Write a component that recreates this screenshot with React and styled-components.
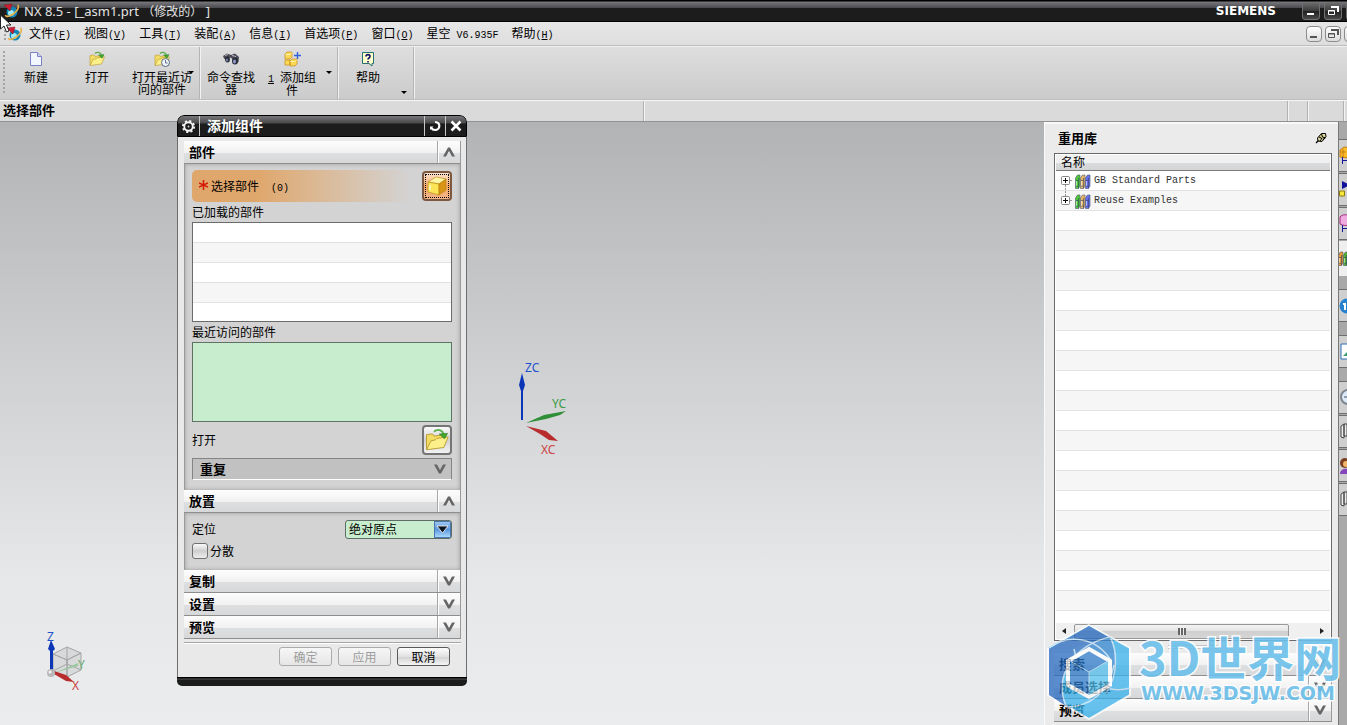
import { useState } from 'react'
import styled, { createGlobalStyle, css } from 'styled-components'

const GlobalStyle = createGlobalStyle`
  * {
    box-sizing: border-box;
  }
  body {
    margin: 0;
    overflow: hidden;
  }
  button, select, input {
    font: inherit;
    color: inherit;
    margin: 0;
  }
  ul {
    list-style: none;
    margin: 0;
    padding: 0;
  }
`

const Desktop = styled.div`
  position: relative;
  display: flex;
  flex-direction: column;
  height: 100vh;
  overflow: hidden;
  font-family: 'Noto Sans CJK SC', sans-serif;
  font-size: 12px;
  line-height: 12px;
  color: #000;
`

const Latin = styled.span`
  font-family: 'Liberation Mono', monospace;
  font-size: 10px;
  line-height: 8px;
  white-space: pre;
`

/* ---- window title ---- */

const TitleBar = styled.header`
  display: flex;
  align-items: center;
  height: 22px;
  padding-left: 3px;
  background: linear-gradient(#000 1px, #77777b 2px, #49494d 8px, #1c1c1c 8px, #1c1c1c 21px, #000 21px);
  color: #e4e4e4;
`

const WindowTitle = styled.h1`
  flex: 1;
  margin: 0 0 0 4px;
  font-family: 'Noto Sans', 'Noto Sans CJK SC', sans-serif;
  font-size: 13px;
  font-weight: 400;
  line-height: 13px;
  white-space: pre;
`

const TitleNote = styled.span`
  font-family: 'Noto Sans CJK SC', sans-serif;
  font-size: 12px;
  text-spacing-trim: space-all;
`

const Brand = styled.span`
  margin-right: 26px;
  font-family: 'DejaVu Sans', sans-serif;
  font-size: 12px;
  font-weight: 700;
  color: #fff;
`

const Controls = styled.div`
  display: flex;
  flex: none;
  gap: ${({ $light }) => ($light ? '3px' : '4px')};
  width: ${({ $light }) => ($light ? '41px' : '45px')};
  overflow: hidden;
`

const ControlButton = styled.button`
  display: flex;
  flex: none;
  align-items: center;
  justify-content: center;
  width: 18px;
  height: 18px;
  padding: 0;
  border: 1px solid #707070;
  border-radius: 3px;
  background: ${({ $close }) =>
    $close ? 'linear-gradient(#e07050, #b02a14)' : 'linear-gradient(#6a6a6a, #3a3a3a 50%, #202020 50%, #484848)'};
  ${({ $light }) =>
    $light &&
    css`
      width: 16px;
      height: 16px;
      border-color: #8c8c8c;
      border-radius: 4px;
      background: linear-gradient(#fff, #dcdcdc);
    `}
`

/* ---- menu, toolbar, cue line ---- */

const MenuBar = styled.nav`
  display: flex;
  align-items: center;
  height: 24px;
  padding-left: 4px;
  background: linear-gradient(#e6e6e6, #dedede);
  border-bottom: 1px solid #bdbdbd;
`

const Grip = styled.span`
  flex: none;
  width: 2px;
  height: ${({ $h }) => $h}px;
  background: repeating-linear-gradient(#a4a4a4 0 2px, transparent 2px 4px);
`

const Menus = styled.ul`
  display: flex;
  flex: 1;
  gap: 13px;
  margin-left: 6px;
`

const MenuLink = styled.a`
  color: inherit;
  text-decoration: none;
  white-space: nowrap;
`

const ToolBar = styled.div`
  display: flex;
  height: 54px;
  background: linear-gradient(#dedede, #cbcbcb);
  border-top: 1px solid #f0f0f0;
  border-bottom: 1px solid #bcbcbc;
`

const ToolGroup = styled.div`
  display: flex;
  padding: ${({ $first }) => ($first ? '0 2px 0 3px' : '0 2px 0 1px')};
  border-right: 1px solid #b4b4b4;
  box-shadow: 1px 0 #f2f2f2;
  align-items: ${({ $first }) => ($first ? 'center' : 'stretch')};
`

const ToolButton = styled.button`
  position: relative;
  display: flex;
  flex-direction: column;
  align-items: center;
  gap: 4px;
  width: ${({ $w }) => $w}px;
  height: 100%;
  padding: 4px 0 0;
  border: 0;
  background: none;
  white-space: pre;
  line-height: 12px;
`

const DropMark = styled.span`
  position: absolute;
  right: 3px;
  top: 24px;
  border: 3px solid transparent;
  border-top-color: #000;
  border-bottom: 0;
`

const MoreButton = styled.button`
  display: flex;
  align-items: center;
  justify-content: center;
  align-self: flex-end;
  width: 14px;
  height: 14px;
  padding: 0;
  border: 0;
  background: none;

  &::after {
    content: '';
    border: 3px solid transparent;
    border-top-color: #000;
    border-bottom: 0;
  }
`

const CueLine = styled.div`
  display: grid;
  grid-template-columns: 1fr 1fr 20px 36px 3px;
  height: 22px;
  background: #dadada;
  border-top: 1px solid #f6f6f6;
  border-bottom: 1px solid #929292;
`

const CueCell = styled.div`
  padding: 3px;
  font-size: 13px;
  font-weight: 700;
  border-right: 1px solid #b2b2b2;
  box-shadow: 1px 0 #f4f4f4;
`

/* ---- graphics area ---- */

const Workspace = styled.main`
  position: relative;
  display: flex;
  flex: 1;
  min-height: 0;
  justify-content: flex-end;
  background: linear-gradient(#b2b3b4, #d0d1d3 42%, #e5e7e8 75%, #eaecee);
`

const Triad = styled.svg`
  position: absolute;
  left: ${({ $x }) => $x}px;
  top: ${({ $y }) => $y}px;
  font-family: 'Noto Sans', sans-serif;
  font-size: 12px;
`

/* ---- add component dialog ---- */

const Dialog = styled.section`
  position: absolute;
  left: 177px;
  top: 115px;
  width: 290px;
  border-radius: 7px 7px 5px 5px;
  background: #e9e9e9;
  overflow: hidden;
`

const DialogTitle = styled.div`
  display: flex;
  align-items: stretch;
  height: 22px;
  border: 1px solid #000;
  border-radius: 7px 7px 0 0;
  background: linear-gradient(#77777a, #4a4a4c 7px, #1c1c1c 8px);
  color: #fff;
`

const DialogName = styled.h2`
  flex: 1;
  margin: 0;
  padding: 2px 7px;
  border-left: 1px solid #c8c8c8;
  font-size: 14px;
  line-height: 14px;
`

const TitleButton = styled.button`
  display: flex;
  align-items: center;
  justify-content: center;
  width: 21px;
  padding: 0;
  border: 0;
  border-left: ${({ $line }) => ($line ? '1px solid #c8c8c8' : '0')};
  background: none;
`

const DialogBody = styled.div`
  padding: 4px 5px 11px 6px;
  border: solid #6e6e6e;
  border-width: 0 1px;
`

const DialogFoot = styled.div`
  height: 9px;
  background: linear-gradient(#000 1px, #555 2px, #1c1c1c 3px);
`

const SectionHead = styled.button`
  display: flex;
  align-items: stretch;
  width: 100%;
  height: 23px;
  padding: 0;
  border: 0;
  border-bottom: 1px solid #8e8e8e;
  border-right: 1px solid #9a9a9a;
  background: linear-gradient(#fdfdfd, #f1f1f2 12px, #dedfe1 12px, #d7d8da);
  font-size: 13px;
  font-weight: 700;
  line-height: 22px;
  text-align: left;
`

const SectionName = styled.span`
  flex: 1;
  padding-left: 5px;
`

const Fold = styled.span`
  display: flex;
  align-items: center;
  justify-content: center;
  width: 23px;
  border-left: 1px solid #a8a8a8;
  box-shadow: inset 1px 0 #fff;
`

const Panel = styled.div`
  padding: ${({ $small }) => ($small ? '5px 8px 8px 7px' : '6px 8px 10px 7px')};
  border: solid #9a9a9a;
  border-width: 0 1px;
  background: #d3d3d3;
  box-shadow: inset 0 0 4px #9c9c9c;
`

const PickRow = styled.div`
  display: flex;
  align-items: center;
  justify-content: space-between;
  height: 32px;
  border-radius: 5px;
  background: linear-gradient(90deg, #e0a76c 25%, #d3d3d3 84%);
`

const PickLabel = styled.span`
  display: flex;
  align-items: center;
  padding-left: 7px;
  gap: 3px;
  white-space: pre;
`

const Star = styled.svg`
  flex: none;
  margin-bottom: 3px;
`

const IconButton = styled.button`
  display: flex;
  align-items: center;
  justify-content: center;
  width: 30px;
  height: 30px;
  padding: 0;
  border: 2px solid #757575;
  border-radius: 4px;
  background: ${({ $active }) =>
    $active ? 'linear-gradient(#fde4d0, #f4a868 50%, #f3b487)' : 'linear-gradient(#fafafa, #d2d2d4 50%, #f2f2f2)'};
  outline: ${({ $active }) => ($active ? '1px dotted #000' : 'none')};
  outline-offset: -4px;
  border-color: ${({ $active }) => ($active ? '#7c5840' : '#757575')};
`

const Caption = styled.div`
  height: 20px;
  line-height: 20px;
`

const LoadedList = styled.div`
  height: 100px;
  border: 1px solid #6b6b6b;
  background: repeating-linear-gradient(#fff 0 19px, #e2e2e2 19px 20px, #f6f6f6 20px 39px, #e2e2e2 39px 40px);
`

const RecentList = styled.div`
  height: 80px;
  border: 1px solid #5f7263;
  background: #c8edce;
`

const OpenRow = styled.div`
  display: flex;
  align-items: center;
  justify-content: space-between;
  margin: 3px 0;
`

const RepeatButton = styled.button`
  display: flex;
  align-items: center;
  justify-content: space-between;
  width: 100%;
  height: 22px;
  padding: 0 5px 0 7px;
  border: 1px solid #858585;
  border-bottom-color: #fff;
  background: #c1c1c1;
  font-size: 13px;
  font-weight: 700;
`

const FieldRow = styled.div`
  display: flex;
  align-items: center;
  justify-content: ${({ $start }) => ($start ? 'flex-start' : 'space-between')};
  gap: 2px;
  height: 22px;
`

const SelectBox = styled.div`
  position: relative;
  display: flex;
  width: 107px;
  height: 19px;
  border: 1px solid #5e6e66;
  border-radius: 3px;
  background: #c8edce;
  overflow: hidden;
`

const Select = styled.select`
  width: 100%;
  padding: 0 3px;
  border: 0;
  appearance: none;
  background: none;
`

const SelectArrow = styled.span`
  position: absolute;
  right: 0;
  top: 0;
  display: flex;
  align-items: center;
  justify-content: center;
  width: 17px;
  height: 17px;
  background: linear-gradient(#9cc6f0, #5c98dc 50%, #a8d8fc);
  border: 1px solid #4a76ae;
  pointer-events: none;
`

const Check = styled.input`
  appearance: none;
  width: 16px;
  height: 16px;
  border: 1px solid #707070;
  border-radius: 3px;
  background: linear-gradient(#fafafa, #cfcfcf 50%, #ededed);

  &:checked {
    background: #6a6a6a;
  }
`

const Actions = styled.div`
  display: flex;
  justify-content: flex-end;
  gap: 6px;
  margin-top: 3px;
  padding: 4px 11px 0 0;
  border-top: 1px solid #a6a6a6;
  box-shadow: inset 0 1px #fff;
`

const ActionButton = styled.button`
  width: 53px;
  height: 19px;
  padding: 0;
  border: 1px solid #5a5a5a;
  border-radius: 3px;
  background: linear-gradient(#fdfdfd, #e2e2e2 50%, #d0d0d0 50%, #f4f4f4);
  line-height: 12px;

  &:disabled {
    border-color: #ababab;
    background: linear-gradient(#f6f6f6, #e6e6e6);
    color: #9c9c9c;
  }
`

/* ---- reuse library ---- */

const Library = styled.aside`
  display: flex;
  flex-direction: column;
  width: 294px;
  padding: 1px 6px 3px 9px;
  border-left: 1px solid #fafafa;
  border-top: 2px solid #f8f8f8;
  background: #ebebeb;
`

const LibraryHead = styled.div`
  display: flex;
  align-items: center;
  justify-content: space-between;
  height: 28px;
  padding: 0 5px 3px 4px;
`

const LibraryName = styled.h2`
  margin: 0;
  font-size: 13px;
  line-height: 13px;
`

const PinButton = styled.button`
  display: flex;
  padding: 0;
  border: 0;
  background: none;
`

const TreeBox = styled.div`
  display: flex;
  flex-direction: column;
  flex: 1;
  min-height: 0;
  padding: 1px;
  border: 1px solid #6a6a6a;
  background: #fff;
`

const TreeHead = styled.div`
  height: 16px;
  padding-left: 5px;
  border-bottom: 1px solid #7c7c7c;
  background: linear-gradient(#f0f0f0 8px, #dadbdd 8px, #d3d4d6);
  line-height: 14px;
`

const Tree = styled.ul`
  flex: 1;
  background: repeating-linear-gradient(#fff 0 19px, #e2e2e2 19px 20px, #f6f6f6 20px 39px, #e2e2e2 39px 40px);
`

const TreeRow = styled.li`
  display: flex;
  align-items: center;
  height: 20px;
  padding-left: 4px;
  gap: 3px;
  color: #333;
`

const ScrollBar = styled.div`
  display: grid;
  grid-template-columns: 18px 1fr 41px;
  align-items: center;
  height: 16px;
  background: #f0f0f0;
`

const ScrollArrow = styled.span`
  justify-self: ${({ $right }) => ($right ? 'end' : 'start')};
  margin: 0 6px;
  border: 4px solid transparent;
  border-width: 3px 4px;
  border-${({ $right }) => ($right ? 'left' : 'right')}-color: #222;
  border-${({ $right }) => ($right ? 'right' : 'left')}-width: 0;
`

const ScrollThumb = styled.div`
  display: flex;
  align-items: center;
  justify-content: center;
  height: 15px;
  border: 1px solid #989898;
  border-radius: 2px;
  background: linear-gradient(#f4f4f4, #e2e2e2 50%, #cfcfcf 50%, #d6d6d6);

  &::after {
    content: '';
    width: 8px;
    height: 7px;
    background: repeating-linear-gradient(90deg, #666 0 2px, #eee 2px 3px);
  }
`

const Splitter = styled.div`
  align-self: center;
  width: 50px;
  height: 4px;
  margin: 4px 0;
  border: solid #c4c4c4;
  border-width: 1px 0;
  background: #f8f8f8;
`

const Rail = styled.nav`
  display: flex;
  flex-direction: column;
  flex: none;
  width: 9px;
  padding-top: 17px;
  background: #a9a9a9;
  border-left: 1px solid #777;
  overflow: hidden;
`

const RailTab = styled.button`
  display: flex;
  flex: none;
  align-items: center;
  width: 36px;
  height: ${({ $active }) => ($active ? '35px' : '33px')};
  margin: ${({ $active, $gap }) => ($active ? '0 0 13px -1px' : $gap ? '0 0 13px' : '0 0 1px')};
  padding: 0;
  border: ${({ $active }) => ($active ? '0' : '1px solid #6e6e6e')};
  border-left-width: 0;
  background: ${({ $active }) => ($active ? '#efefef' : '#cfcfcf')};
`

/* ---- site mark in the corner ---- */

const SiteMark = styled.div`
  position: absolute;
  right: 8px;
  bottom: 4px;
  display: flex;
  align-items: center;
  gap: 7px;
  pointer-events: none;
  color: #6cc0ea;
`

const LogoDrawing = styled.svg`
  opacity: 0.74;
`

const SiteText = styled.div`
  display: flex;
  flex-direction: column;
  gap: 6px;
  width: 200px;
  padding-bottom: 8px;
  white-space: nowrap;
  opacity: 0.9;
  paint-order: stroke fill;
  -webkit-text-stroke: 3px #fff;
`

const SiteName = styled.span`
  font-size: 47px;
  font-weight: 700;
  line-height: 44px;
`

const SiteUrl = styled.span`
  font-family: 'DejaVu Sans', sans-serif;
  font-size: 19px;
  font-weight: 700;
  line-height: 18px;
  padding-left: 2px;
`

const Pointer = styled.svg`
  position: absolute;
  left: 0;
  top: 14px;
`

/* ---- drawings ---- */

const NxLogo = () => (
  <svg width="17" height="16" viewBox="0 0 17 16" aria-hidden="true">
    <circle cx="9" cy="9" r="5.5" fill="#1286b8" />
    <circle cx="8" cy="10" r="3" fill="#9feaf8" />
    <path d="M14.500 2c3 2-2 9-8 11-3 1-4 0-4-1" fill="none" stroke="#e8b04a" strokeWidth="1.6" />
    <path d="M1 2l8-1-2 7z" fill="#cf1e33" stroke="#7a1020" strokeWidth=".5" />
  </svg>
)

const MinIcon = ({ color }) => (
  <svg width="12" height="12" aria-hidden="true">
    <path d="M2 9h7" stroke={color} strokeWidth="2" />
  </svg>
)

const RestoreIcon = ({ color }) => (
  <svg width="12" height="12" fill="none" stroke={color} aria-hidden="true">
    <path d="M4 2h7v5" strokeWidth="2" />
    <path d="M1.500 5.500h6v4h-6zM1 6h7" />
  </svg>
)

const PageIcon = () => (
  <svg width="16" height="16" aria-hidden="true">
    <path d="M2.500 1.500h7l4 4v9h-11z" fill="#f4f6ff" stroke="#7b83c4" />
    <path d="M9.500 1.500v4h4" fill="#cdd3f4" stroke="#7b83c4" />
  </svg>
)

const FolderIcon = ({ size = 16, clock }) => (
  <svg width={size} height={size} viewBox="0 0 16 16" aria-hidden="true">
    <path d="M1 14V4.500l4-.6 1 1.500 6-.8V8z" fill="#f3dc64" stroke="#b8982e" strokeWidth=".6" />
    <path d="M1 14.500L4 8.500l3-.6 1-1 7.500-1L12.500 13z" fill="#fbf08a" stroke="#b8982e" strokeWidth=".6" />
    <path d="M6 2.500C8 .5 11.500 1 12.300 4" fill="none" stroke="#5fae4c" strokeWidth="1.200" />
    <path d="M9.500 4l5.500-.4-2 3.600z" fill="#43a832" stroke="#217514" strokeWidth=".4" />
    {clock && (
      <g fill="#eef4fa" stroke="#5a6a7c">
        <circle cx="11.500" cy="11.500" r="4" />
        <path d="M11.500 9v3h2.200" fill="none" strokeWidth=".9" />
      </g>
    )}
  </svg>
)

const BinocularsIcon = () => (
  <svg width="18" height="16" viewBox="0 0 18 16" aria-hidden="true">
    <path d="M1 5l4-2.500 4 1.500 4-1.500 4 3.500-.5 5-4 1.500-2.500-5-2-1-3 3-3-2z" fill="#4a4b55" />
    <ellipse cx="5.500" cy="8.500" rx="2.400" ry="3" fill="#2a2c38" />
    <ellipse cx="13" cy="10" rx="3" ry="3.500" fill="#292b36" />
    <ellipse cx="12.500" cy="10.500" rx="1.500" ry="2" fill="#8d98cc" />
    <ellipse cx="5" cy="9" rx="1" ry="1.500" fill="#7d87ac" />
    <path d="M3 4.500l3-1M10 4.500l4 1" stroke="#b7b8bf" />
  </svg>
)

const AddPartIcon = () => (
  <svg width="17" height="16" viewBox="0 0 17 16" aria-hidden="true">
    <g fill="#fbd852" stroke="#c68a1c" strokeWidth=".7">
      <path d="M1 3l2-2h5v5l-2 2H1zM6 10l2-2h5v5l-2 2H6zM1 9h5v5H1z" />
    </g>
    <path d="M1.500 3.500H6L8 1.500M6.500 10.500H11l2-2" fill="none" stroke="#fff3b0" />
    <path d="M13.500 1v7M10 4.500h7" stroke="#3160d8" strokeWidth="1.400" />
  </svg>
)

const HelpIcon = () => (
  <svg width="16" height="16" aria-hidden="true">
    <path d="M2.500 1.500h11v11H12V15l-3-2.500H2.500z" fill="#ffffcb" stroke="#23706e" />
    <path d="M6 5.500c0-2.500 4-2.500 4 0C10 7 8 7 8 8.500M8 10v1.500" fill="none" stroke="#101068" strokeWidth="1.600" />
  </svg>
)

const CubeIcon = () => (
  <svg width="20" height="20" viewBox="0 0 20 20" stroke="#b58212" strokeWidth=".6" aria-hidden="true">
    <path d="M1 6l8-5 10 2-7 5z" fill="#fff6a4" />
    <path d="M1 6l11 2v11L1 16z" fill="#fbe455" />
    <path d="M12 8l7-5v11l-7 5z" fill="#d99415" />
    <path d="M3 14V9" stroke="#fffbd0" strokeWidth="1.500" />
  </svg>
)

const GearIcon = () => (
  <svg width="15" height="15" viewBox="-8 -8 16 16" fill="none" stroke="#f4f4f4" aria-hidden="true">
    <circle r="4.500" strokeWidth="2" />
    <circle r="6" strokeWidth="2" strokeDasharray="2.300 2.412" />
    <circle r="1" fill="#ddd" stroke="none" />
  </svg>
)

const ResetIcon = () => (
  <svg width="14" height="14" fill="none" stroke="#fff" aria-hidden="true">
    <path d="M7 3c6 0 5.500 8 0 8-2 0-3-.8-3.600-2" strokeWidth="2.200" />
    <path d="M2 11V7.500h3.500z" fill="#fff" stroke="none" />
  </svg>
)

const CrossIcon = () => (
  <svg width="14" height="14" aria-hidden="true">
    <path d="M2.500 2.500l9 9M11.500 2.500l-9 9" stroke="#fff" strokeWidth="2.600" />
  </svg>
)

const Chevron = ({ up }) => (
  <svg width="12" height="10" aria-hidden="true">
    <path d={up ? 'M0 9.500L5 .5h2l5 9H9L6 4 3 9.500z' : 'M0 .5l5 9h2l5-9H9L6 6 3 .5z'} fill="#666" />
  </svg>
)

const PinIcon = () => (
  <svg width="12" height="12" aria-hidden="true">
    <path d="M1 11l3-3" stroke="#000" strokeWidth="1.200" />
    <path d="M2.500 6l4-4.500h4l.5 3-4 5-4-.5z" fill="#d5cf8c" stroke="#000" />
    <path d="M4 5l3 1.500M6.500 2l1 3 3 1M5 9l2-3M8 8l2-3" fill="none" stroke="#000" />
    <path d="M4 6.500l1 1M8.500 3h1" stroke="#fff" />
  </svg>
)

const BooksIcon = ({ orange }) => (
  <svg width="16" height="15" viewBox="0 0 16 15" aria-hidden="true">
    {[orange ? '#e89a34' : '#4fcc35', orange ? '#4fb52c' : '#e9b968', '#6670ee'].map((c, i) => (
      <g key={c} transform={`translate(${i * 5} 0)`}>
        <path d="M.5 4L2.500 1H5v11l-1.500 2.500h-3z" fill={c} stroke="#4b5468" strokeWidth=".6" />
        <path d="M3.500 4v10.500M1 6.500h2.500M1 12h2.500" fill="none" stroke="#333c68" strokeWidth=".6" />
        <path d="M1.500 7v5" stroke="#fff" strokeOpacity=".5" />
      </g>
    ))}
  </svg>
)

const ExpandIcon = ({ last }) => (
  <svg width="12" height="20" fill="none" aria-hidden="true">
    <path d={last ? 'M10 9.500h2M5.500 0v5' : 'M10 9.500h2M5.500 14v6'} stroke="#999" strokeDasharray="2 1" />
    <rect x="1.500" y="5.500" width="8" height="8" rx="1" fill="#fff" stroke="#888" />
    <path d="M3 9.500h5M5.500 7v5" stroke="#111" />
  </svg>
)

const railIcons = {
  assembly: (
    <>
      <path d="M1 4l4-3 8 1v8l-4 2-8-1z" fill="#f8be2a" stroke="#c57a12" />
      <path d="M4 3v8M1 6h6" stroke="#c57a12" />
      <path d="M3.500 11v7M4 14.500h8" stroke="#17179a" />
    </>
  ),
  constraint: (
    <>
      <path d="M3 1l8 4-8 4z" fill="#10109a" />
      <path d="M.5 11h5v5h-5z" fill="#f7e73c" stroke="#8d7c0c" />
    </>
  ),
  part: (
    <>
      <path d="M1 3c2-3 8-3 11 0v7c-3 2-8 2-11 0z" fill="#efaadf" stroke="#a52c80" />
      <path d="M3.500 11v7M4 14.500h8" stroke="#17179a" />
    </>
  ),
  info: (
    <>
      <circle cx="8" cy="10" r="7.500" fill="#2582d0" />
      <path d="M4 8h2v6" stroke="#fff" strokeWidth="2" />
    </>
  ),
  web: (
    <>
      <path d="M2 2h14v15H2z" fill="#fff" stroke="#2c70b8" />
      <path d="M4 14l4-4v4z" fill="#3da070" />
    </>
  ),
  clock: (
    <>
      <circle cx="9" cy="9" r="7" fill="#dce9f6" stroke="#7e858f" strokeWidth="2" />
      <path d="M9 5v4H5" stroke="#456" />
    </>
  ),
  door: <path d="M2 4l3-2v14l-3-1zM5 2h3v12H5z" fill="#eee" stroke="#444" />,
  user: (
    <>
      <circle cx="6" cy="7" r="5" fill="#7b3e20" />
      <circle cx="7" cy="8" r="3" fill="#f2b56c" />
      <path d="M1 18c0-7 12-7 12 0z" fill="#8645bd" />
    </>
  ),
}

const rail = [
  { icon: 'assembly', label: '装配导航器' },
  { icon: 'constraint', label: '约束导航器' },
  { icon: 'part', label: '部件导航器' },
  { icon: 'books', label: '重用库', active: true },
  { icon: 'info', label: 'HD3D 工具', gap: true },
  { icon: 'web', label: 'Web 浏览器', gap: true },
  { icon: 'clock', label: '历史记录' },
  { icon: 'door', label: '系统材料' },
  { icon: 'user', label: '角色' },
  { icon: 'door', label: '系统场景' },
]

const SiteLogo = () => (
  <LogoDrawing width="86" height="98" viewBox="0 0 86 98" aria-hidden="true">
    <path d="M43 2l41 23v47L43 96 2 72V25z" fill="#34b0ea" stroke="#fff" strokeWidth="2" />
    <path d="M43 3L3 26v46l17 11C8 56 26 24 64 15z" fill="#2468c0" />
    <path d="M64 15c7 12 8 36-1 54C44 67 28 52 26 27 36 20 50 16 64 15z" fill="#2c72c4" opacity=".7" />
    <path d="M20 83C8 54 26 23 64 14M2 25C24 10 50 15 64 36M84 65C60 72 34 56 28 26M20 84c24 0 43-15 48-42M64 14c7 12 9 38-4 56" fill="none" stroke="#b9dcf3" strokeWidth="1.500" />
    <path d="M43 26l21 12v24L43 74 22 62V38z" fill="#2c78c8" stroke="#fff" strokeWidth="4" />
    <path d="M43 49l19-11v23L43 72z" fill="#54c0ee" />
    <path d="M24 38l19 11 19-11M43 49v23" fill="none" stroke="#a9d4ef" />
  </LogoDrawing>
)

const menus = [
  ['文件', 'F'],
  ['视图', 'V'],
  ['工具', 'T'],
  ['装配', 'A'],
  ['信息', 'I'],
  ['首选项', 'P'],
  ['窗口', 'O'],
  ['星空', null, ' V6.935F'],
  ['帮助', 'H'],
]

const Section = ({ name, open, onToggle, children }) => (
  <>
    <SectionHead type="button" aria-expanded={open} onClick={onToggle}>
      <SectionName>{name}</SectionName>
      <Fold>
        <Chevron up={open} />
      </Fold>
    </SectionHead>
    {open && children}
  </>
)

const AddComponent = () => {
  const [open, setOpen] = useState({ part: true, place: true })
  const toggle = key => () => setOpen(prev => ({ ...prev, [key]: !prev[key] }))

  return (
    <Dialog aria-label="添加组件">
      <DialogTitle>
        <TitleButton type="button" aria-label="选项">
          <GearIcon />
        </TitleButton>
        <DialogName>添加组件</DialogName>
        <TitleButton $line type="button" aria-label="重置">
          <ResetIcon />
        </TitleButton>
        <TitleButton $line type="button" aria-label="关闭">
          <CrossIcon />
        </TitleButton>
      </DialogTitle>
      <DialogBody>
        <Section name="部件" open={open.part} onToggle={toggle('part')}>
          <Panel>
            <PickRow>
              <PickLabel>
                <Star width="9" height="10" aria-hidden="true">
                  <path d="M4.500 0v10M0 3l9 4M9 3L0 7" stroke="#d41a06" strokeWidth="1.500" />
                </Star>
                <span>
                  选择部件<Latin>{'  (0)'}</Latin>
                </span>
              </PickLabel>
              <IconButton $active type="button" aria-label="选择部件">
                <CubeIcon />
              </IconButton>
            </PickRow>
            <Caption>已加载的部件</Caption>
            <LoadedList role="listbox" aria-label="已加载的部件" />
            <Caption>最近访问的部件</Caption>
            <RecentList role="listbox" aria-label="最近访问的部件" />
            <OpenRow>
              <span>打开</span>
              <IconButton type="button" aria-label="打开">
                <FolderIcon size={24} />
              </IconButton>
            </OpenRow>
            <RepeatButton type="button">
              重复
              <Chevron />
            </RepeatButton>
          </Panel>
        </Section>
        <Section name="放置" open={open.place} onToggle={toggle('place')}>
          <Panel $small>
            <FieldRow>
              <label htmlFor="position">定位</label>
              <SelectBox>
                <Select id="position">
                  <option>绝对原点</option>
                </Select>
                <SelectArrow>
                  <svg width="13" height="9" aria-hidden="true">
                    <path d="M1 1h11L6.500 8z" fill="#0c1420" stroke="#fff" strokeWidth=".8" />
                  </svg>
                </SelectArrow>
              </SelectBox>
            </FieldRow>
            <FieldRow $start>
              <Check type="checkbox" id="scatter" />
              <label htmlFor="scatter">分散</label>
            </FieldRow>
          </Panel>
        </Section>
        <Section name="复制" />
        <Section name="设置" />
        <Section name="预览" />
        <Actions>
          <ActionButton type="button" disabled>
            确定
          </ActionButton>
          <ActionButton type="button" disabled>
            应用
          </ActionButton>
          <ActionButton type="button">取消</ActionButton>
        </Actions>
      </DialogBody>
      <DialogFoot />
    </Dialog>
  )
}

const ReuseLibrary = () => (
  <Library>
    <LibraryHead>
      <LibraryName>重用库</LibraryName>
      <PinButton type="button" aria-label="固定">
        <PinIcon />
      </PinButton>
    </LibraryHead>
    <TreeBox>
      <TreeHead>名称</TreeHead>
      <Tree>
        {['GB Standard Parts', 'Reuse Examples'].map((name, i) => (
          <TreeRow key={name}>
            <ExpandIcon last={i === 1} />
            <BooksIcon />
            <Latin>{name}</Latin>
          </TreeRow>
        ))}
      </Tree>
      <ScrollBar>
        <ScrollArrow />
        <ScrollThumb />
        <ScrollArrow $right />
      </ScrollBar>
    </TreeBox>
    <Splitter />
    <Section name="搜索" />
    <Section name="成员选择" />
    <Section name="预览" />
  </Library>
)

const App = () => (
  <Desktop>
    <GlobalStyle />
    <TitleBar>
      <NxLogo />
      <WindowTitle>
        NX 8.5 - [_asm1.prt <TitleNote>（修改的）</TitleNote> ]
      </WindowTitle>
      <Brand>SIEMENS</Brand>
      <Controls>
        <ControlButton type="button" aria-label="最小化">
          <MinIcon color="#fff" />
        </ControlButton>
        <ControlButton type="button" aria-label="还原">
          <RestoreIcon color="#fff" />
        </ControlButton>
        <ControlButton $close type="button" aria-label="关闭" />
      </Controls>
    </TitleBar>
    <MenuBar>
      <Grip $h={16} />
      <NxLogo />
      <Menus>
        {menus.map(([name, key, tail]) => (
          <li key={name}>
            <MenuLink href="#">
              {name}
              <Latin>{key ? <>(<u>{key}</u>)</> : tail}</Latin>
            </MenuLink>
          </li>
        ))}
      </Menus>
      <Controls $light>
        <ControlButton $light type="button" aria-label="最小化部件">
          <MinIcon color="#555" />
        </ControlButton>
        <ControlButton $light type="button" aria-label="还原部件">
          <RestoreIcon color="#555" />
        </ControlButton>
        <ControlButton $light type="button" aria-label="关闭部件" />
      </Controls>
    </MenuBar>
    <ToolBar>
      <ToolGroup $first>
        <Grip $h={44} />
        <ToolButton $w={62} type="button">
          <PageIcon />
          <span>新建</span>
        </ToolButton>
        <ToolButton $w={60} type="button">
          <FolderIcon />
          <span>打开</span>
        </ToolButton>
        <ToolButton $w={70} type="button">
          <FolderIcon clock />
          <span>{'打开最近访\n问的部件'}</span>
          <DropMark />
        </ToolButton>
      </ToolGroup>
      <ToolGroup>
        <ToolButton $w={60} type="button">
          <BinocularsIcon />
          <span>{'命令查找\n器'}</span>
        </ToolButton>
        <ToolButton $w={62} type="button">
          <AddPartIcon />
          <span>
            <Latin>
              <u>1</u>{' '}
            </Latin>
            {'添加组\n件'}
          </span>
        </ToolButton>
        <ToolButton $w={12} type="button" aria-label="更多组件命令">
          <DropMark />
        </ToolButton>
      </ToolGroup>
      <ToolGroup>
        <ToolButton $w={58} type="button">
          <HelpIcon />
          <span>帮助</span>
        </ToolButton>
        <MoreButton type="button" aria-label="工具条选项" />
      </ToolGroup>
    </ToolBar>
    <CueLine>
      <CueCell>选择部件</CueCell>
      <CueCell />
      <CueCell />
      <CueCell />
    </CueLine>
    <Workspace>
      <Triad $x={510} $y={236} width="70" height="100">
        <path d="M12 15l-3 12 2 6v29h2V33l2-6z" fill="#0c36b8" />
        <path d="M16 65l18-8 22-4-6 4-14 4z" fill="#2f8f38" />
        <path d="M16 68l20 5 12 10-9-1-9-6z" fill="#b92c2e" />
        <text x="15" y="14" fill="#2250cc">ZC</text>
        <text x="42" y="50" fill="#3a9a42">YC</text>
        <text x="31" y="96" fill="#cc4444">XC</text>
      </Triad>
      <Triad $x={40} $y={504} width="60" height="66">
        <g fill="#c8caca" fillOpacity=".5" stroke="#a3a5a6">
          <path d="M13 28l14-7 14 6-14 7z" />
          <path d="M13 28l14 6v17l-14-6zM41 27v17l-14 7V34z" />
          <path d="M27 21v17l14 6M27 38l-14 7" fill="none" />
        </g>
        <path d="M14 47l24-10v3z" fill="#9cc79f" />
        <path d="M11 14l-3 9 2 2v20h3V25l2-2z" fill="#0c36b8" />
        <path d="M14 45l12 4 8 7-8-1-12-7z" fill="#b92c2e" />
        <circle cx="11" cy="47" r="4" fill="#b8b8ba" />
        <circle cx="10" cy="46" r="1.500" fill="#f4f4f4" />
        <text x="7" y="15" fill="#2250cc">Z</text>
        <text x="38" y="43" fill="#6cab70">Y</text>
        <text x="32" y="64" fill="#cc4444">X</text>
      </Triad>
      <ReuseLibrary />
      <Rail>
        {rail.map(({ icon, label, active, gap }) => (
          <RailTab key={label} $active={active} $gap={gap} type="button" aria-label={label}>
            {icon === 'books' ? (
              <BooksIcon orange />
            ) : (
              <svg width="16" height="19" fill="none" aria-hidden="true">
                {railIcons[icon]}
              </svg>
            )}
          </RailTab>
        ))}
      </Rail>
    </Workspace>
    <AddComponent />
    <SiteMark>
      <SiteLogo />
      <SiteText>
        <SiteName>3D世界网</SiteName>
        <SiteUrl>WWW.3DSJW.COM</SiteUrl>
      </SiteText>
    </SiteMark>
    <Pointer width="14" height="20" aria-hidden="true">
      <path d="M.5 1v14l3.500-3 2.500 6 2.500-1-2.500-6H11z" fill="#fff" stroke="#222" />
    </Pointer>
  </Desktop>
)

export default App
